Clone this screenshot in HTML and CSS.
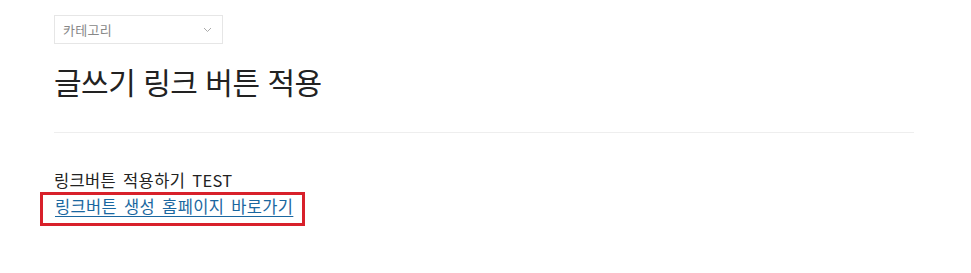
FILE: index.html
```html
<!DOCTYPE html>
<html lang="ko">
<head>
<meta charset="utf-8">
<link rel="stylesheet" href="styles.css">
</head>
<body>
<div class="page">
  <div class="select">
    <span class="select-label">카테고리</span>
    <svg class="chev" width="9" height="6" viewBox="0 0 9 6"><path d="M1 1 L4.5 4.5 L8 1" fill="none" stroke="#aaa" stroke-width="1"/></svg>
  </div>
  <h1 class="title">글쓰기 링크 버튼 적용</h1>
  <hr class="divider">
  <div class="content">
    <p class="line">링크버튼 적용하기 TEST</p>
    <p class="line link-line"><a class="link" href="#">링크버튼 생성 홈페이지 바로가기</a><span class="mark"></span></p>
  </div>
</div>
</body>
</html>
```
FILE: styles.css
```css
html, body {
  margin: 0;
  padding: 0;
  background: #fff;
}
body {
  font-family: "Noto Sans CJK KR", "Noto Sans", sans-serif;
  color: #222;
}
.page {
  padding: 15px 56px 45px 54px;
}
.select {
  display: flex;
  align-items: center;
  justify-content: space-between;
  padding: 0 10px 0 8px;
  border: 1px solid #e6e6e6;
  box-sizing: border-box;
  width: 169px;
  height: 29px;
}
.select-label {
  font-size: 13px;
  color: #888;
  letter-spacing: 0.3px;
}
.chev {
  display: block;
}
.title {
  margin: 16px 0 0 0;
  font-size: 30px;
  font-weight: 400;
  line-height: 42px;
  color: #222;
  letter-spacing: -0.5px;
}
.divider {
  border: 0;
  border-top: 1px solid #eee;
  margin: 30px 1px 0 0;
}
.content {
  padding-top: 34px;
}
.line {
  margin: 0;
  font-size: 16.5px;
  line-height: 26px;
  color: #222;
  letter-spacing: 0.35px;
  word-spacing: 2px;
}
.link-line {
  position: relative;
  display: inline-block;
}
.link {
  color: #1a67a0;
  text-decoration: underline;
  text-underline-offset: 3px;
  padding-left: 1px;
}
.mark {
  position: absolute;
  left: -14px;
  top: -1px;
  width: 265px;
  height: 34px;
  border: 3px solid #d8202a;
  box-sizing: border-box;
}
```
